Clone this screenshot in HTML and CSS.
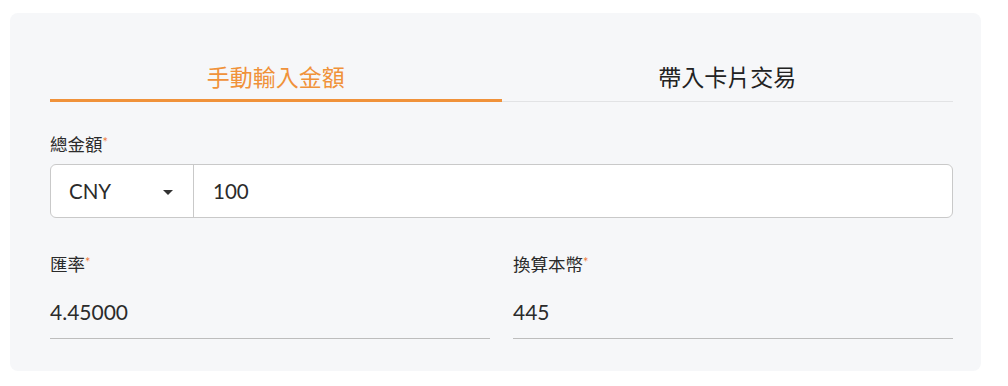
FILE: index.html
```html
<!DOCTYPE html>
<html lang="zh-Hant">
<head>
    <meta charset="UTF-8">
    <meta name="viewport" content="width=device-width, initial-scale=1.0">
    <title>交易金額</title>
    <link rel="stylesheet" href="styles.css">
</head>
<body>
    <div class="card">
        <div class="tabs">
            <div class="tab tab-active">手動輸入金額</div>
            <div class="tab">帶入卡片交易</div>
        </div>
        <div class="field">
            <div class="label">總金額<span class="req">*</span></div>
            <div class="amount-group">
                <div class="currency">
                    <span>CNY</span>
                    <span class="caret"></span>
                </div>
                <div class="amount">100</div>
            </div>
        </div>
        <div class="row">
            <div class="field">
                <div class="label">匯率<span class="req">*</span></div>
                <div class="line-input">4.45000</div>
            </div>
            <div class="field">
                <div class="label">換算本幣<span class="req">*</span></div>
                <div class="line-input">445</div>
            </div>
        </div>
    </div>
</body>
</html>
```

FILE: styles.css
```css
:root {
    --active-color: #f0923a;
    --text-color: #2b2b2b;
    --border-color: #c9c9c9;
}
body{
    margin: 0;
    background: #fff;
    font-family: Lato, "Noto Sans CJK TC", sans-serif;
    color: var(--text-color);
}
.card{
    margin: 13px 0 0 10px;
    width: 971px;
    height: 358px;
    box-sizing: border-box;
    padding: 41px 28px 0 40px;
    background: #f6f7f9;
    border-radius: 8px;
}
.tabs{
    display: flex;
    border-bottom: 1px solid #e2e3e5;
}
.tab{
    flex: 1;
    height: 47px;
    line-height: 47px;
    text-align: center;
    font-size: 23px;
    color: #222;
    border-bottom: 3px solid transparent;
    margin-bottom: -1px;
    box-sizing: border-box;
}
.tab-active{
    color: var(--active-color);
    border-bottom-color: var(--active-color);
    height: 48px;
}
.field{
    margin-top: 31px;
}
.label{
    font-size: 17.5px;
    line-height: 24px;
    margin-bottom: 7px;
}
.req{
    color: #f07b3c;
    font-size: 13px;
    vertical-align: top;
    line-height: 18px;
}
.amount-group{
    display: flex;
    height: 54px;
    box-sizing: border-box;
    border: 1px solid var(--border-color);
    border-radius: 6px;
    background: #fff;
    font-size: 20.5px;
}
.currency{
    width: 143px;
    box-sizing: border-box;
    padding: 0 20px 0 18px;
    display: flex;
    align-items: center;
    justify-content: space-between;
    border-right: 1px solid var(--border-color);
}
.caret{
    width: 0;
    height: 0;
    border-left: 5px solid transparent;
    border-right: 5px solid transparent;
    border-top: 5px solid #333;
    margin-top: 2px;
}
.amount{
    display: flex;
    align-items: center;
    padding-left: 19px;
}
.row{
    display: grid;
    grid-template-columns: 1fr 1fr;
    column-gap: 23px;
}
.row .field{
    margin-top: 35px;
}
.line-input{
    height: 55px;
    padding-top: 16px;
    line-height: 24px;
    font-size: 21px;
    box-sizing: border-box;
    border-bottom: 1px solid #bdbdbd;
}
```
